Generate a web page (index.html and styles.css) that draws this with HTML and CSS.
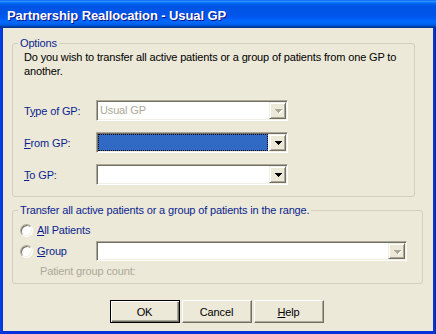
FILE: index.html
```html
<!DOCTYPE html>
<html>
<head>
<meta charset="utf-8">
<link rel="stylesheet" href="styles.css">
</head>
<body>
<div class="window">
  <div class="titlebar"><span class="title">Partnership Reallocation - Usual GP</span></div>
  <div class="client">
    <fieldset class="group group-options">
      <legend>Options</legend>
      <p class="desc">Do you wish to transfer all active patients or a group of patients from one GP to another.</p>
      <div class="row">
        <span class="label">T<u>y</u>pe of GP:</span>
        <div class="combo disabled">
          <span class="value">Usual GP</span>
          <span class="drop"><svg width="7" height="4" viewBox="0 0 7 4"><path d="M0 0h7v1h-1v1h-1v1h-1v1h-1v-1h-1v-1h-1v-1h-1z"/></svg></span>
        </div>
      </div>
      <div class="row">
        <span class="label"><u>F</u>rom GP:</span>
        <div class="combo">
          <span class="value selected"></span>
          <span class="drop"><svg width="7" height="4" viewBox="0 0 7 4"><path d="M0 0h7v1h-1v1h-1v1h-1v1h-1v-1h-1v-1h-1v-1h-1z"/></svg></span>
        </div>
      </div>
      <div class="row">
        <span class="label"><u>T</u>o GP:</span>
        <div class="combo">
          <span class="value"></span>
          <span class="drop"><svg width="7" height="4" viewBox="0 0 7 4"><path d="M0 0h7v1h-1v1h-1v1h-1v1h-1v-1h-1v-1h-1v-1h-1z"/></svg></span>
        </div>
      </div>
    </fieldset>
    <fieldset class="group group-range">
      <legend>Transfer all active patients or a group of patients in the range.</legend>
      <div class="radio-row first">
        <span class="radio-wrap"><span class="radio"></span><span class="radio-text"><u>A</u>ll Patients</span></span>
      </div>
      <div class="radio-row">
        <span class="radio-wrap"><span class="radio"></span><span class="radio-text"><u>G</u>roup</span></span>
        <div class="combo wide disabled-btn">
          <span class="value"></span>
          <span class="drop"><svg width="7" height="4" viewBox="0 0 7 4"><path d="M0 0h7v1h-1v1h-1v1h-1v1h-1v-1h-1v-1h-1v-1h-1z"/></svg></span>
        </div>
      </div>
      <p class="count">Patient group count:</p>
    </fieldset>
    <div class="buttons">
      <button class="btn default">OK</button>
      <button class="btn">Cancel</button>
      <button class="btn"><u>H</u>elp</button>
    </div>
  </div>
</div>
</body>
</html>
```
FILE: styles.css
```css
html, body {
  margin: 0;
  padding: 0;
  width: 436px;
  height: 334px;
  overflow: hidden;
  background: #ece9d8;
}

.window {
  width: 436px;
  height: 334px;
  box-sizing: border-box;
  display: flex;
  flex-direction: column;
  background: linear-gradient(to right, #0036d6 0, #0a45e8 1px, #0831d9 2px, #0831d9 433px, #0a3fd8 434px, #001ea0 436px);
  font-family: "Liberation Sans", Arial, sans-serif;
  font-size: 11px;
  letter-spacing: -0.15px;
  color: #000;
}

.titlebar {
  height: 28px;
  flex: none;
  display: flex;
  align-items: center;
  padding: 2px 0 0 7px;
  box-sizing: border-box;
  background: linear-gradient(to bottom, #0058ee 0%, #3593ff 4%, #288eff 6%, #127dff 8%, #036ffc 10%, #0262ee 14%, #0057e5 20%, #0054e3 24%, #0055eb 56%, #005bf5 66%, #026afe 76%, #0062ef 86%, #0052d6 92%, #0040ab 94%, #003092 100%);
}

.title {
  color: #fff;
  font-weight: bold;
  font-size: 13px;
  text-shadow: 1px 1px #0f1089;
  letter-spacing: -0.1px;
}

.client {
  flex: 1;
  margin: 0 3px 3px 3px;
  background: #ece9d8;
  padding: 9px 0 0 9px;
  display: flex;
  flex-direction: column;
  align-items: flex-start;
}

.group {
  margin: 0;
  border: 1px solid #d0d0bf;
  border-radius: 3px;
  min-width: 0;
  box-sizing: border-box;
  display: flex;
  flex-direction: column;
}

.group legend {
  color: #0b1f8f;
  line-height: 13px;
  padding: 0 2px;
}

.group-options {
  width: 403px;
  padding: 0 8px 11px 11px;
}

.group-options legend {
  margin-left: -6px;
}

.desc {
  margin: 0;
  line-height: 14px;
}

.row {
  display: flex;
  align-items: center;
  height: 21px;
  margin-top: 11px;
}

.desc + .row {
  margin-top: 22px;
}

.label {
  width: 72px;
  color: #0b1f8f;
}

.combo {
  width: 192px;
  height: 21px;
  box-sizing: border-box;
  display: flex;
  padding: 1px;
  background: #fff;
  border: 1px solid;
  border-color: #aca899 #fff #fff #aca899;
  box-shadow: inset 1px 1px #716f64, inset -1px -1px #f1efe2;
}

.combo.wide {
  width: 311px;
  height: 20px;
}

.value {
  flex: 1;
  line-height: 17px;
  padding-left: 2px;
  margin-right: 1px;
}

.disabled .value {
  color: #aca899;
}

.value.selected {
  background: #316ac5;
  border: 1px dotted #000;
  margin: 0 1px 0 0;
}

.drop {
  width: 17px;
  flex: none;
  box-sizing: border-box;
  display: flex;
  align-items: center;
  justify-content: center;
  background: #ece9d8;
  border: 1px solid;
  border-color: #f1efe2 #716f64 #716f64 #f1efe2;
  box-shadow: inset 1px 1px #fff, inset -1px -1px #aca899;
  padding: 1px 0 0 1px;
}

.drop svg {
  display: block;
  fill: #000;
}

.disabled .drop svg,
.disabled-btn .drop svg {
  fill: #aca899;
  filter: drop-shadow(1px 1px 0 #fff);
}

.group-range {
  width: 411px;
  margin-top: 7px;
  padding: 0 10px 5px 7px;
}

.group-range legend {
  margin-left: -2px;
}

.radio-row {
  display: flex;
  align-items: center;
  height: 20px;
  margin-top: 1px;
}

.radio-row.first {
  margin-top: 3px;
}

.radio-wrap {
  width: 76px;
  display: flex;
  align-items: center;
}

.radio {
  width: 13px;
  height: 13px;
  box-sizing: border-box;
  border-radius: 50%;
  background: #fff;
  border: 1px solid;
  border-color: #aca899 #fff #fff #aca899;
  box-shadow: inset 1px 1px #716f64, inset -1px -1px #f1efe2;
}

.radio-text {
  margin-left: 4px;
  color: #0b1f8f;
}

.count {
  margin: 3px 0 0 20px;
  line-height: 14px;
  color: #aca899;
}

.buttons {
  align-self: stretch;
  margin: 16px 0 0 -9px;
  display: flex;
  justify-content: center;
  gap: 2px;
  padding-right: 3px;
}

.btn {
  width: 70px;
  height: 23px;
  box-sizing: border-box;
  font-family: "Liberation Sans", Arial, sans-serif;
  font-size: 11px;
  letter-spacing: -0.15px;
  color: #000;
  background: #ece9d8;
  border: 1px solid;
  border-color: #fff #716f64 #716f64 #fff;
  box-shadow: inset -1px -1px #aca899;
  padding: 0;
}

.btn.default {
  border-color: #000;
  box-shadow: inset 1px 1px #fff, inset -1px -1px #716f64, inset -2px -2px #aca899;
}
```
